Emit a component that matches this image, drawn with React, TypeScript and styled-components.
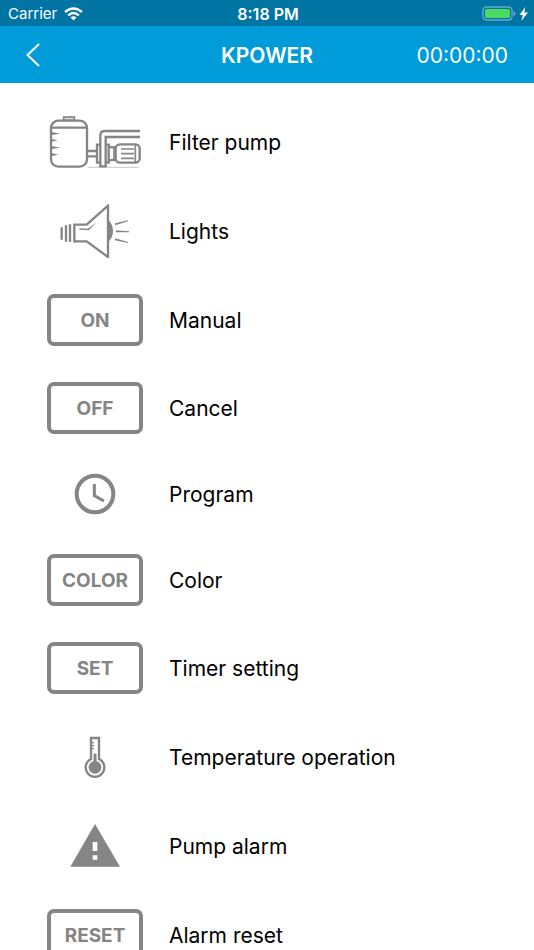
import React from 'react';
import styled, { createGlobalStyle } from 'styled-components';

const GREY = '#858585';

const GlobalStyle = createGlobalStyle`
  *, *::before, *::after { box-sizing: border-box; }
  body {
    margin: 0;
    background: #fff;
    color: #000;
    font-family: Inter, 'Liberation Sans', sans-serif;
  }
`;

const Screen = styled.div`
  display: flex;
  flex-direction: column;
  height: 100vh;
`;

const StatusBar = styled.div`
  flex: none;
  display: grid;
  grid-template-columns: 1fr auto 1fr;
  align-items: center;
  height: 26px;
  padding: 2px 6px 0 8px;
  background: #0074a3;
  color: #fff;
  font-size: 15px;
  line-height: 20px;
`;

const StatusGroup = styled.div<{ $end?: boolean }>`
  display: flex;
  align-items: center;
  justify-content: ${({ $end }) => ($end ? 'flex-end' : 'flex-start')};
  gap: ${({ $end }) => ($end ? '3px' : '7px')};
`;

const Clock = styled.time`
  font-size: 16px;
  font-weight: 600;
`;

const NavBar = styled.header`
  flex: none;
  display: grid;
  grid-template-columns: 1fr auto 1fr;
  align-items: center;
  height: 57px;
  padding: 0 26px;
  background: #009cd9;
  color: #fff;
`;

const BackButton = styled.button`
  display: flex;
  justify-self: start;
  padding: 4px 4px 4px 0;
  border: 0;
  background: none;
  color: inherit;
  cursor: pointer;
`;

const Title = styled.h1`
  margin: 0;
  padding-top: 2px;
  font-size: 21px;
  font-weight: 600;
  line-height: 28px;
`;

const Timer = styled.span`
  justify-self: end;
  padding-top: 2px;
  font-size: 21px;
  line-height: 28px;
`;

const Content = styled.main`
  flex: 1;
  min-height: 0;
  overflow-y: auto;
  scrollbar-width: none;
`;

const List = styled.ul`
  display: flex;
  flex-direction: column;
  gap: 36px;
  margin: 0;
  padding: 32px 24px 32px 47px;
  list-style: none;
`;

const Row = styled.li`
  display: grid;
  grid-template-columns: 96px 1fr;
  align-items: center;
  column-gap: 26px;
`;

const Label = styled.span`
  padding-top: 2px;
  font-size: 21px;
  line-height: 28px;
`;

const KeyCap = styled.span`
  display: flex;
  align-items: center;
  justify-content: center;
  height: 52px;
  padding-top: 2px;
  border: 4px solid ${GREY};
  border-radius: 7px;
  color: ${GREY};
  font-size: 19px;
  font-weight: 700;
  line-height: 28px;
`;

const Drawing = styled.svg`
  display: block;
  width: 96px;
  fill: none;
  stroke: ${GREY};
  stroke-width: 7;
`;

const PumpIcon = () => (
  <Drawing viewBox="21 30 288 159" height="53" aria-hidden="true">
    <path d="M143 187H296" stroke="#c9c9c9" strokeWidth="3" />
    <rect x="71" y="36" width="32" height="10" fill="#ddd" strokeWidth="5" />
    <rect x="33" y="47" width="108" height="138" rx="22" />
    <path d="M33 68H141" />
    <path
      d="M35 81L61 86L35 90ZM35 102L53 106L35 110ZM35 123L61 128L35 132ZM35 144L55 149L35 153Z"
      fill={GREY}
      stroke="none"
    />
    <path d="M143 138H168M143 154H168" />
    <path d="M181 119H171V173H181M197 119H206V173H197" />
    <path d="M300 78H194Q181 78 181 91V184H197V96H300" />
    <path d="M206 125Q216 129 227 126M206 167Q216 163 227 166" />
    <path d="M222 127V165" strokeWidth="5" />
    <rect x="227" y="118" width="72" height="55" rx="13" />
    <path d="M286 119V173" strokeWidth="5" />
    <path d="M243 132H282M243 146H282M243 160H282" strokeWidth="5" />
  </Drawing>
);

const LightIcon = () => (
  <Drawing viewBox="21 27 288 162" height="54" aria-hidden="true">
    <path d="M65 97V134M78 91V140M90 88V141" />
    <path d="M103 89H140L204 32V186L140 139H103Z" />
    <path d="M206 76Q219 90 219 108T206 140Z" fill={GREY} stroke="none" />
    <path
      d="M118 100L144 101L169 82L147 106L118 104ZM225 85L264 76V79L226 91ZM228 106L267 109V112L228 112ZM226 130L264 141V144L225 136Z"
      fill={GREY}
      stroke="none"
    />
  </Drawing>
);

const ProgramIcon = () => (
  <Drawing viewBox="-39 15 288 144" height="48" aria-hidden="true">
    <circle cx="105" cy="87" r="55" strokeWidth="12" />
    <path d="M103 57V92L132 108" strokeWidth="9" />
  </Drawing>
);

const ThermometerIcon = () => (
  <Drawing viewBox="-69 15 288 159" height="53" aria-hidden="true">
    <path d="M63 102V39H87V102A28 28 0 1 1 63 102Z" />
    <circle cx="75" cy="127" r="19" fill={GREY} stroke="none" />
    <path d="M75 86V112" strokeWidth="9" />
    <path d="M66 53H72M66 62H72M66 71H72" strokeWidth="4" />
  </Drawing>
);

const AlarmIcon = () => (
  <Drawing viewBox="-39 12 288 162" height="54" aria-hidden="true">
    <path d="M105 27L180 155H31Z" fill={GREY} stroke="none" />
    <path d="M98 81H112V108H98ZM98 121H112V134H98Z" fill="#fff" stroke="none" />
  </Drawing>
);

const WifiIcon = () => (
  <svg width="19" height="14" viewBox="0 0 19 14" fill="none" stroke="#fff" strokeWidth="2.4" aria-hidden="true">
    <path d="M1 5Q9.500 -2.200 18 5M4.200 8.300Q9.500 3.700 14.800 8.300" />
    <path d="M6.500 10.600Q9.500 8 12.500 10.600L9.500 13.600Z" fill="#fff" stroke="none" />
  </svg>
);

const BatteryIcon = () => (
  <svg width="34" height="16" viewBox="0 0 34 16" aria-hidden="true">
    <rect x="1" y="1" width="29" height="13" rx="3.500" fill="none" stroke="#69abc8" strokeWidth="1.400" />
    <rect x="3" y="3" width="25" height="9" rx="1.500" fill="#4cd964" />
    <path d="M31.500 5Q33.500 5.500 33.500 7.500T31.500 10Z" fill="#69abc8" />
  </svg>
);

const BoltIcon = () => (
  <svg width="9" height="14" viewBox="0 0 9 14" fill="#fff" aria-hidden="true">
    <path d="M6.300 0L0.500 8H3.800L2.300 14L9 5.600H5.300Z" />
  </svg>
);

const items: { label: string; symbol: React.ReactNode }[] = [
  { label: 'Filter pump', symbol: <PumpIcon /> },
  { label: 'Lights', symbol: <LightIcon /> },
  { label: 'Manual', symbol: <KeyCap>ON</KeyCap> },
  { label: 'Cancel', symbol: <KeyCap>OFF</KeyCap> },
  { label: 'Program', symbol: <ProgramIcon /> },
  { label: 'Color', symbol: <KeyCap>COLOR</KeyCap> },
  { label: 'Timer setting', symbol: <KeyCap>SET</KeyCap> },
  { label: 'Temperature operation', symbol: <ThermometerIcon /> },
  { label: 'Pump alarm', symbol: <AlarmIcon /> },
  { label: 'Alarm reset', symbol: <KeyCap>RESET</KeyCap> },
];

export default function App() {
  return (
    <>
      <GlobalStyle />
      <Screen>
        <StatusBar>
          <StatusGroup>
            <span>Carrier</span>
            <WifiIcon />
          </StatusGroup>
          <Clock>8:18 PM</Clock>
          <StatusGroup $end>
            <BatteryIcon />
            <BoltIcon />
          </StatusGroup>
        </StatusBar>
        <NavBar>
          <BackButton type="button" aria-label="Back">
            <svg width="14" height="24" viewBox="0 0 14 24" fill="none" stroke="#fff" strokeWidth="2" strokeLinecap="round" aria-hidden="true">
              <path d="M12.500 1.500L1.500 12L12.500 22.500" />
            </svg>
          </BackButton>
          <Title>KPOWER</Title>
          <Timer>00:00:00</Timer>
        </NavBar>
        <Content>
          <List>
            {items.map(({ label, symbol }) => (
              <Row key={label}>
                {symbol}
                <Label>{label}</Label>
              </Row>
            ))}
          </List>
        </Content>
      </Screen>
    </>
  );
}
